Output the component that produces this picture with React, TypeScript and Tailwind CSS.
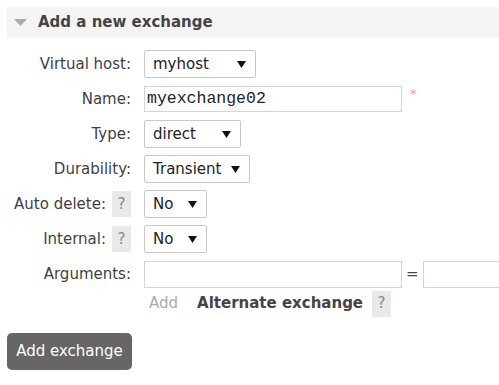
const font = { fontFamily: '"DejaVu Sans", Verdana, sans-serif' };

function Caret() {
    return (
        <svg width="9" height="7" viewBox="0 0 9 7" className="shrink-0">
            <path d="M0 0 H9 L4.5 7 Z" fill="#111" />
        </svg>
    );
}

function Select({ value, width }: { value: string; width: string }) {
    return (
        <div className={`${width} shrink-0 h-[28px] bg-white border border-[#c8c8c8] rounded-[2px] flex items-center justify-between pl-[8px] pr-[9px] text-[15px] text-[#222]`}>
            <span>{value}</span>
            <Caret />
        </div>
    );
}

function Help() {
    return (
        <span className="w-[19px] h-[26px] shrink-0 bg-[#e9e9e9] text-[#888] text-[15px] flex items-center justify-center">?</span>
    );
}

function Row({ label, help, children }: { label: string; help?: boolean; children: React.ReactNode }) {
    return (
        <div className="flex items-center h-[28px]">
            <div className="w-[131px] shrink-0 flex items-center justify-end gap-[6px] text-[15px] text-[#3f3f3f]">
                <span>{label}</span>
                {help && <Help />}
            </div>
            <div className="ml-[13px] shrink-0 flex items-center">{children}</div>
        </div>
    );
}

export default function App() {
    return (
        <div className="w-[499px] h-[385px] bg-white overflow-hidden" style={font}>
            <div className="pt-[7px] pl-[7px]">
                <div className="h-[31px] bg-[#f4f4f4] flex items-center pl-[7px]">
                    <svg width="13" height="7" viewBox="0 0 13 7" className="mr-[11px]">
                        <path d="M0 0 H13 L6.5 7 Z" fill="#aaa" />
                    </svg>
                    <span className="text-[15px] font-bold text-[#444]">Add a new exchange</span>
                </div>
            </div>

            <div className="mt-[12px] flex flex-col gap-[7px]">
                <Row label="Virtual host:">
                    <Select value="myhost" width="w-[112px]" />
                </Row>
                <Row label="Name:">
                    <div className="w-[258px] shrink-0 h-[26px] border border-[#d4d4d4] flex items-center pl-[2px] text-[16.5px] text-[#222]" style={{ fontFamily: '"Liberation Mono", monospace' }}>
                        myexchange02
                    </div>
                    <span className="ml-[8px] text-[#f99] text-[13px] self-start -mt-[2px]">*</span>
                </Row>
                <Row label="Type:">
                    <Select value="direct" width="w-[97px]" />
                </Row>
                <Row label="Durability:">
                    <Select value="Transient" width="w-[106px]" />
                </Row>
                <Row label="Auto delete:" help>
                    <Select value="No" width="w-[63px]" />
                </Row>
                <Row label="Internal:" help>
                    <Select value="No" width="w-[63px]" />
                </Row>
                <Row label="Arguments:">
                    <div className="w-[258px] h-[27px] border border-[#d4d4d4] shrink-0" />
                    <span className="mx-[4px] text-[15px] text-[#444]">=</span>
                    <div className="w-[258px] h-[27px] border border-[#d4d4d4] shrink-0" />
                </Row>
            </div>

            <div className="mt-[3px] ml-[149px] flex items-center h-[25px]">
                <span className="text-[15px] text-[#aaa]">Add</span>
                <span className="ml-[19px] text-[15px] font-bold text-[#444]">Alternate exchange</span>
                <span className="ml-[9px]"><Help /></span>
            </div>

            <div className="mt-[17px] ml-[7px]">
                <button className="w-[125px] h-[37px] bg-[#666] rounded-[5px] text-white text-[15px] flex items-center justify-center">
                    Add exchange
                </button>
            </div>
        </div>
    );
}
